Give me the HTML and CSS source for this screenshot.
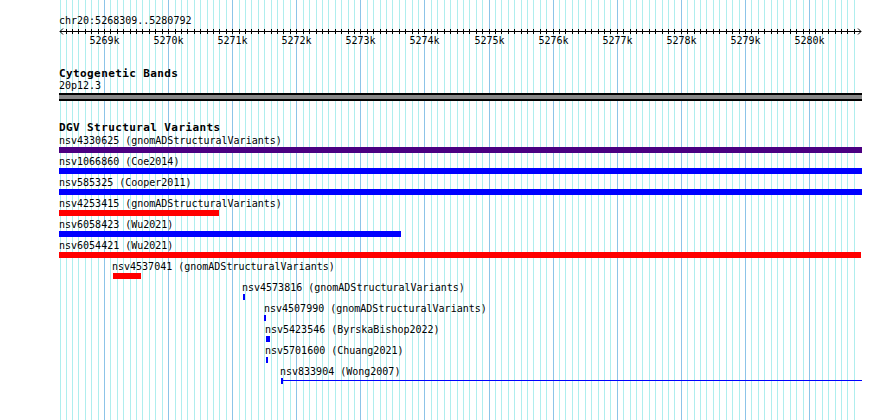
FILE: index.html
```html
<!DOCTYPE html>
<html>
<head>
    <meta name="viewport" content="width=device-width, initial-scale=1">
    <link rel="icon" href="data:,">
    <link rel="stylesheet" href="styles.css">
</head>
<body>
    <div class="panel">
        <svg class="grid" id="grid" width="890" height="420"></svg>

        <div class="track ruler">
            <div class="label">chr20:5268309..5280792</div>
            <svg class="axis" id="axis" width="890" height="20"></svg>
        </div>

        <div class="track cyto">
            <div class="track-title">Cytogenetic Bands</div>
            <div class="label">20p12.3</div>
            <div class="band"></div>
        </div>

        <div class="track dgv">
            <div class="track-title">DGV Structural Variants</div>
            <div class="feature" style="margin-left:59px">
                <div class="label">nsv4330625 (gnomADStructuralVariants)</div>
                <div class="bar purple" style="width:803px"></div>
            </div>
            <div class="feature" style="margin-left:59px">
                <div class="label">nsv1066860 (Coe2014)</div>
                <div class="bar blue" style="width:803px"></div>
            </div>
            <div class="feature" style="margin-left:59px">
                <div class="label">nsv585325 (Cooper2011)</div>
                <div class="bar blue" style="width:803px"></div>
            </div>
            <div class="feature" style="margin-left:59px">
                <div class="label">nsv4253415 (gnomADStructuralVariants)</div>
                <div class="bar red" style="width:160px"></div>
            </div>
            <div class="feature" style="margin-left:59px">
                <div class="label">nsv6058423 (Wu2021)</div>
                <div class="bar blue" style="width:342px"></div>
            </div>
            <div class="feature" style="margin-left:59px">
                <div class="label">nsv6054421 (Wu2021)</div>
                <div class="bar red" style="width:802px"></div>
            </div>
            <div class="feature" style="margin-left:112px">
                <div class="label">nsv4537041 (gnomADStructuralVariants)</div>
                <div class="bar red" style="width:28px;margin-left:1px"></div>
            </div>
            <div class="feature" style="margin-left:242px">
                <div class="label">nsv4573816 (gnomADStructuralVariants)</div>
                <div class="bar blue" style="width:2px;margin-left:1px"></div>
            </div>
            <div class="feature" style="margin-left:264px">
                <div class="label">nsv4507990 (gnomADStructuralVariants)</div>
                <div class="bar blue" style="width:2px"></div>
            </div>
            <div class="feature" style="margin-left:265px">
                <div class="label">nsv5423546 (ByrskaBishop2022)</div>
                <div class="bar blue" style="width:4px;margin-left:1px"></div>
            </div>
            <div class="feature" style="margin-left:265px">
                <div class="label">nsv5701600 (Chuang2021)</div>
                <div class="bar blue" style="width:2px;margin-left:1px"></div>
            </div>
            <div class="feature" style="margin-left:280px">
                <div class="label">nsv833904 (Wong2007)</div>
                <div class="span-row">
                    <div class="bar blue" style="width:2px;margin-left:1px"></div>
                    <div class="connector" style="width:579px"></div>
                </div>
            </div>
        </div>
    </div>

    <script>
        var SVG = 'http://www.w3.org/2000/svg';

        // 5269k sits on pixel 104, 5280k on pixel 809
        function xpos(bp) {
            return Math.round(104 + (bp - 5269000) * 0.064091);
        }

        function add(parent, tag, attrs, text) {
            var el = document.createElementNS(SVG, tag);
            for (var k in attrs) el.setAttribute(k, attrs[k]);
            if (text) el.textContent = text;
            parent.appendChild(el);
            return el;
        }

        var grid = document.getElementById('grid');
        var axis = document.getElementById('axis');

        // axis line with arrow heads at both ends
        add(axis, 'path', {
            d: 'M60 4.5 H861 M63 1.5 L60 4.5 L63 7.5 M858 1.5 L861 4.5 L858 7.5',
            class: 'axis-line'
        });

        for (var bp = 5268300; bp <= 5280700; bp += 100) {
            var x = Math.max(60, xpos(bp));
            var major = bp % 1000 === 0;
            add(grid, 'rect', {
                x: x, y: 0, width: 1, height: 420,
                class: major ? 'grid-major' : 'grid-minor'
            });
            if (x > 60) {
                add(axis, 'rect', { x: x, y: 2, width: 1, height: 5, class: 'tick' });
            }
            if (major) {
                add(axis, 'text', { x: x + 0.5, y: 17, class: 'tick-label' }, (bp / 1000) + 'k');
            }
        }
    </script>
</body>
</html>
```

FILE: styles.css
```css
html, body {
    margin: 0;
    padding: 0;
    background-color: #ffffff;
}

.panel {
    position: relative;
    width: 890px;
    height: 420px;
    overflow: hidden;
    padding-top: 15px;
    box-sizing: border-box;
    font-family: 'DejaVu Sans Mono', 'Liberation Mono', monospace;
    font-size: 10px;
    line-height: 12px;
    color: #000;
}

.grid {
    position: absolute;
    top: 0;
    left: 0;
    z-index: 0;
}

.grid-minor {
    fill: #afeeee;
}

.grid-major {
    fill: #8cc4e8;
}

.track {
    position: relative;
    z-index: 1;
}

.label {
    white-space: nowrap;
    height: 12px;
}

.ruler .label,
.cyto .label,
.track-title {
    padding-left: 59px;
}

.axis {
    display: block;
}

.axis-line {
    fill: none;
    stroke: #000;
    stroke-width: 1;
}

.tick {
    fill: #000;
}

.tick-label {
    font-family: 'DejaVu Sans Mono', 'Liberation Mono', monospace;
    font-size: 10px;
    text-anchor: middle;
    fill: #000;
}

.track-title {
    font-size: 11px;
    font-weight: bold;
    letter-spacing: 0.4px;
    line-height: 13px;
    white-space: nowrap;
}

.cyto {
    margin-top: 20px;
}

.band {
    margin-top: 1px;
    margin-left: 59px;
    width: 803px;
    height: 4px;
    background-color: #888888;
    border-top: 2px solid #000;
    border-bottom: 2px solid #000;
}

.dgv {
    margin-top: 20px;
}

.dgv .track-title {
    margin-bottom: 1px;
}

.feature {
    margin-bottom: 3px;
}

.bar {
    height: 6px;
}

.purple {
    background-color: #4b0082;
}

.blue {
    background-color: #0000ff;
}

.red {
    background-color: #ff0000;
}

.span-row {
    display: flex;
    align-items: flex-start;
}

.connector {
    height: 1px;
    margin-top: 2px;
    background-color: #0000ff;
}
```
